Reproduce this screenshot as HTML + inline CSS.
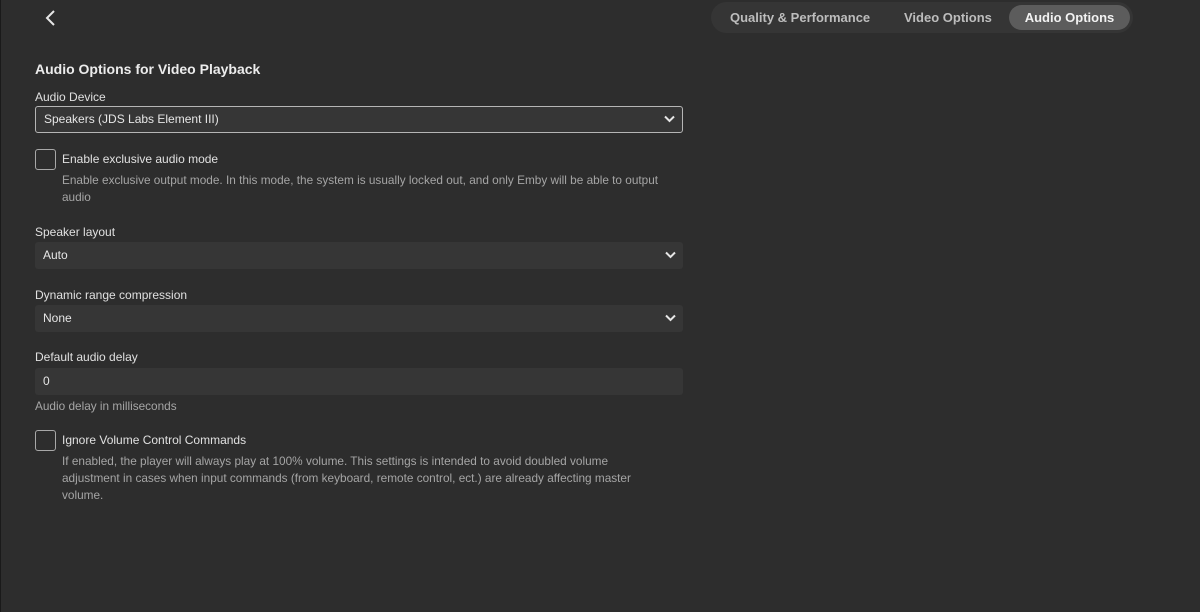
<!DOCTYPE html>
<html><head><style>
*{box-sizing:border-box;margin:0;padding:0}
body{width:1200px;height:612px;background:#2d2d2d;font-family:"Liberation Sans",sans-serif;color:#e6e6e6;position:relative;overflow:hidden}
.abs{position:absolute}
.tabs{left:711px;top:2px;width:422px;height:31px;background:#353535;border-radius:16px}
.tab{position:absolute;top:8px;font-size:13px;font-weight:bold;color:#bdbdbd}
.active{position:absolute;left:298px;top:3px;width:121px;height:25px;background:#5c5c5c;border-radius:13px;color:#f2f2f2;font-size:13px;font-weight:bold;text-align:center;line-height:25px}
.lbl{font-size:12px;color:#e0e0e0}
.sel{left:35px;width:648px;height:27px;background:#363636;border-radius:3px;font-size:12px;line-height:27px;padding-left:8px;color:#e6e6e6}
.chev{position:absolute;right:7px;top:9px}
.cb{width:21px;height:21px;border:1.5px solid #a8a8a8;border-radius:3px}
.desc{font-size:11.8px;color:#a5a5a5;line-height:17px}
</style></head><body>
<div class="abs" style="left:0;top:0;width:1px;height:612px;background:#1a1a1a"></div>
<svg class="abs" style="left:44px;top:9px" width="14" height="18" viewBox="0 0 14 18"><path d="M10 2 L3 9 L10 16" stroke="#e6e6e6" stroke-width="2" fill="none"/></svg>
<div class="abs tabs">
<span class="tab" style="left:19px">Quality &amp; Performance</span>
<span class="tab" style="left:193px">Video Options</span>
<div class="active">Audio Options</div>
</div>
<div class="abs" style="left:35px;top:61px;font-size:14px;font-weight:bold;color:#ececec">Audio Options for Video Playback</div>
<div class="abs lbl" style="left:35px;top:90px">Audio Device</div>
<div class="abs sel" style="top:106px;border:1px solid #b5b5b5;line-height:25px">Speakers (JDS Labs Element III)<svg class="chev" style="top:8px" width="11" height="8"><path d="M1 1.5 L5.5 6 L10 1.5" stroke="#e6e6e6" stroke-width="2" fill="none"/></svg></div>
<div class="abs cb" style="left:35px;top:149px"></div>
<div class="abs lbl" style="left:62px;top:152px">Enable exclusive audio mode</div>
<div class="abs desc" style="left:62px;top:172px;width:625px">Enable exclusive output mode. In this mode, the system is usually locked out, and only Emby will be able to output audio</div>
<div class="abs lbl" style="left:35px;top:225px">Speaker layout</div>
<div class="abs sel" style="top:242px">Auto<svg class="chev" width="11" height="8"><path d="M1 1.5 L5.5 6 L10 1.5" stroke="#e6e6e6" stroke-width="2" fill="none"/></svg></div>
<div class="abs lbl" style="left:35px;top:288px">Dynamic range compression</div>
<div class="abs sel" style="top:305px">None<svg class="chev" width="11" height="8"><path d="M1 1.5 L5.5 6 L10 1.5" stroke="#e6e6e6" stroke-width="2" fill="none"/></svg></div>
<div class="abs lbl" style="left:35px;top:350px">Default audio delay</div>
<div class="abs sel" style="top:368px">0</div>
<div class="abs desc" style="left:35px;top:398px">Audio delay in milliseconds</div>
<div class="abs cb" style="left:35px;top:430px"></div>
<div class="abs lbl" style="left:62px;top:433px">Ignore Volume Control Commands</div>
<div class="abs desc" style="left:62px;top:453px;width:600px">If enabled, the player will always play at 100% volume. This settings is intended to avoid doubled volume adjustment in cases when input commands (from keyboard, remote control, ect.) are already affecting master volume.</div>
</body></html>
